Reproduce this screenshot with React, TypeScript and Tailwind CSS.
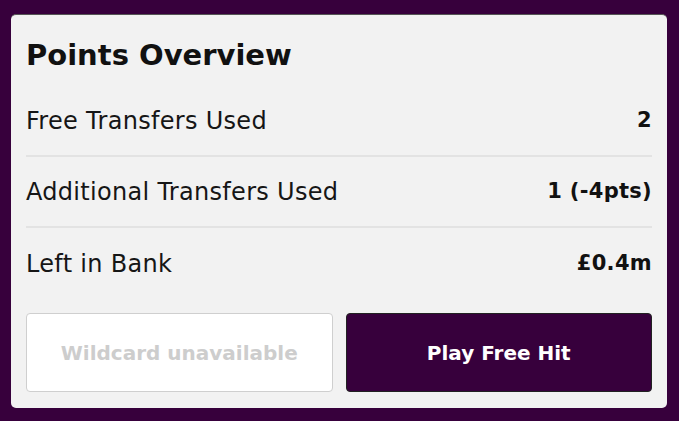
export default function App() {
  const rows = [
    { label: "Free Transfers Used", value: "2" },
    { label: "Additional Transfers Used", value: "1 (-4pts)" },
    { label: "Left in Bank", value: "£0.4m" },
  ];
  return (
    <div className="w-[679px] h-[421px] bg-[#37003c] pt-[14px] pl-[11px] pr-[12px]" style={{ fontFamily: '"DejaVu Sans", sans-serif' }}>
      <div className="bg-[#f2f2f2] rounded-[5px] border-t border-[#555] px-[15px] pt-[22px] pb-[16px]">
        <h2 className="text-[29px] leading-[36px] font-bold text-[#111]">Points Overview</h2>
        <div className="mt-[13px]">
          {rows.map((r, i) => (
            <div key={r.label} className={`flex items-center justify-between h-[71px] ${i < rows.length - 1 ? "border-b-2 border-[#e3e3e3]" : ""}`}>
              <span className="text-[24px] tracking-[0.3px] text-[#161616]">{r.label}</span>
              <span className="text-[21px] tracking-[0.3px] font-bold text-[#111]">{r.value}</span>
            </div>
          ))}
        </div>
        <div className="flex gap-[13px] mt-[14px]">
          <button className="flex-1 h-[79px] bg-white border border-[#cfcfcf] rounded-[4px] text-[20px] font-bold text-[#cdcdcd]">Wildcard unavailable</button>
          <button className="flex-1 h-[79px] bg-[#37003c] border border-[#222] rounded-[4px] text-[20px] font-bold text-white">Play Free Hit</button>
        </div>
      </div>
    </div>
  );
}
